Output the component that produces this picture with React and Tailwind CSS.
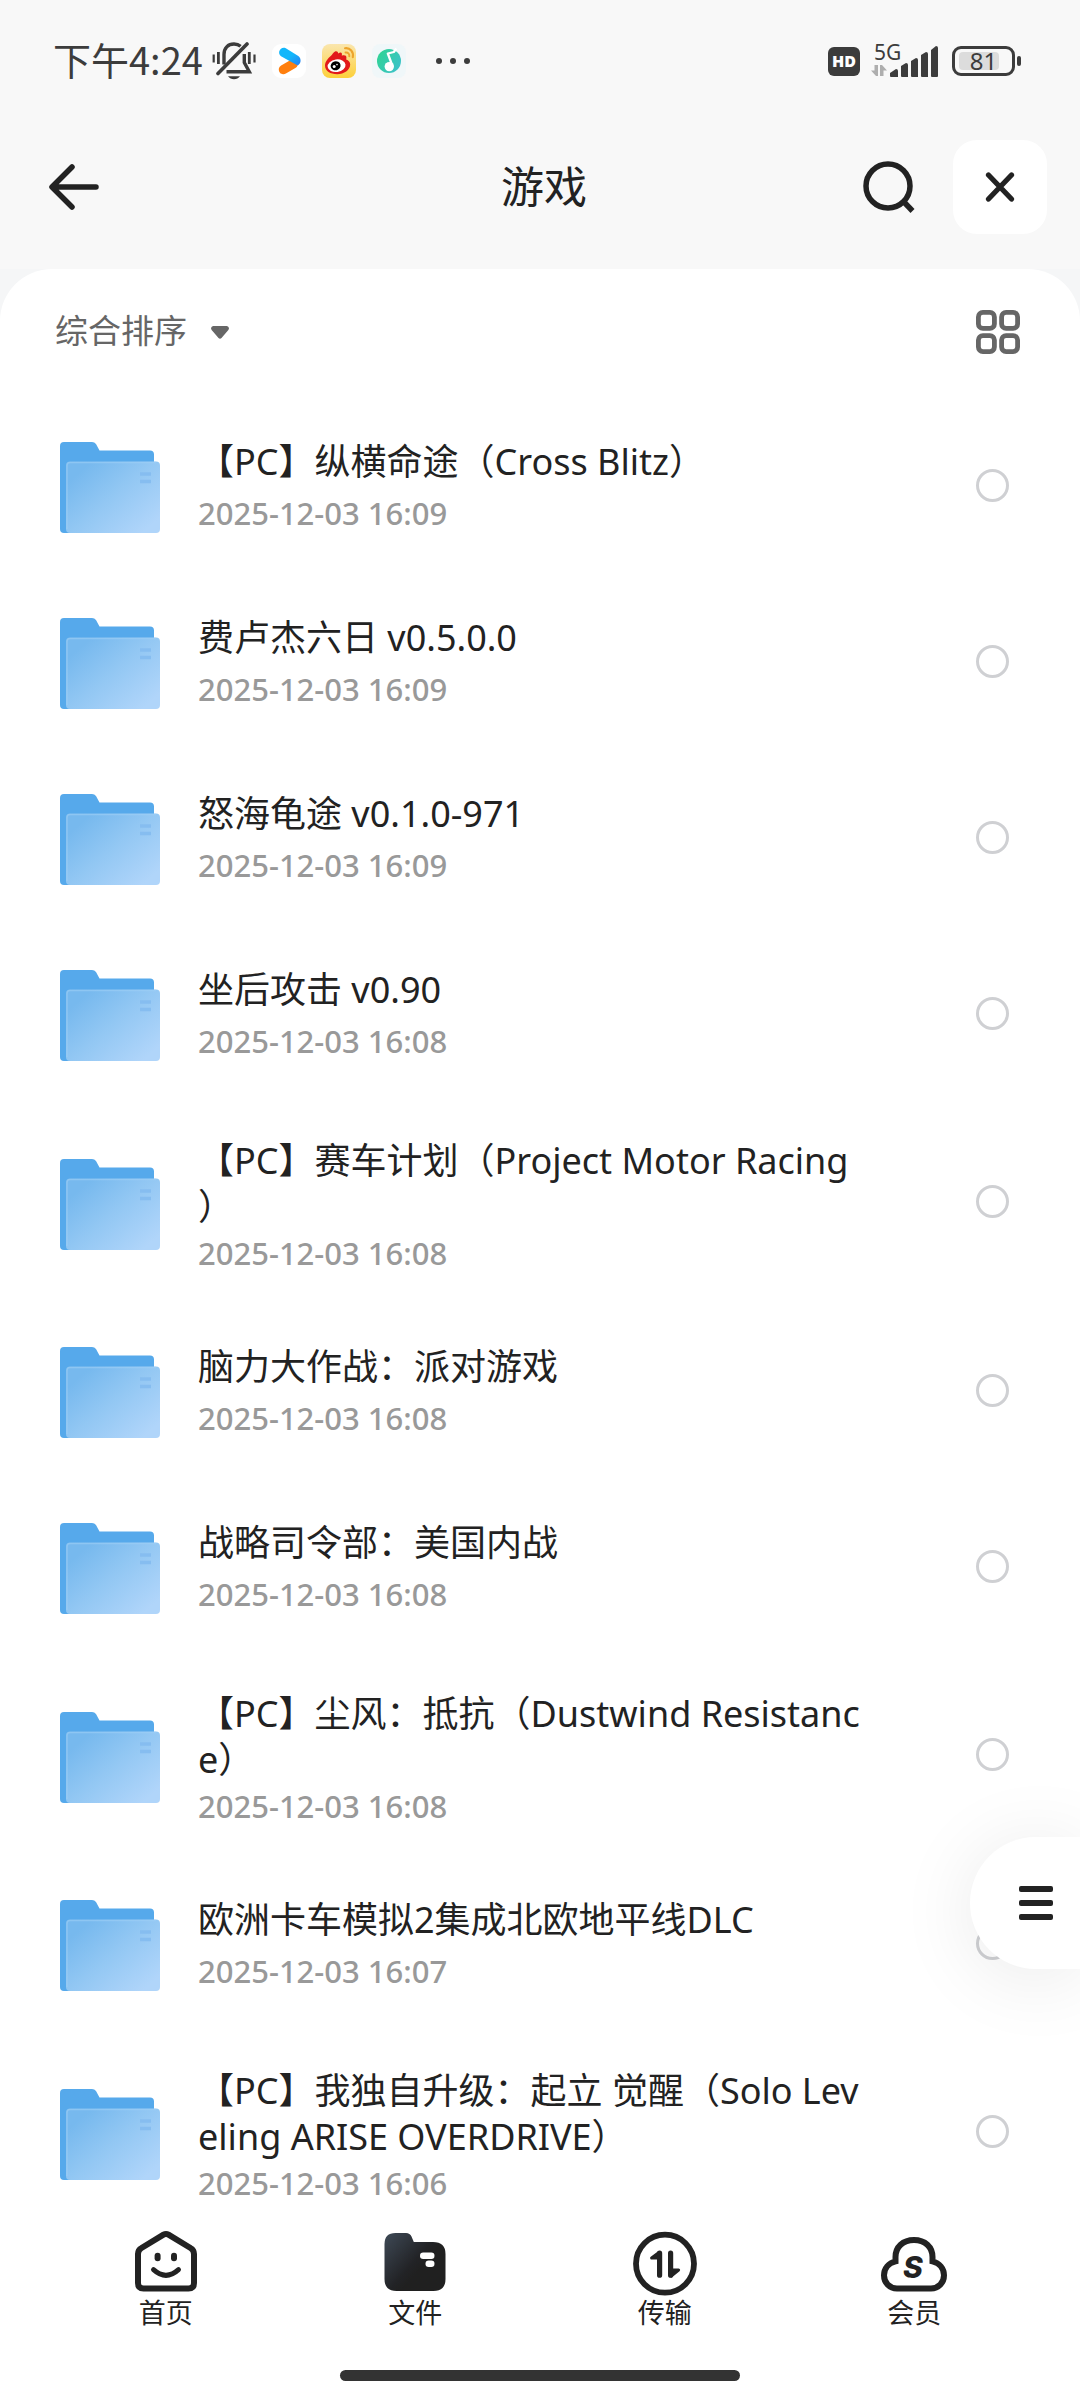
import React, { useState } from 'react';

const FILES = [
  { id: 1, name: '【PC】纵横命途（Cross Blitz）', time: '2025-12-03 16:09' },
  { id: 2, name: '费卢杰六日 v0.5.0.0', time: '2025-12-03 16:09' },
  { id: 3, name: '怒海龟途 v0.1.0-971', time: '2025-12-03 16:09' },
  { id: 4, name: '坐后攻击 v0.90', time: '2025-12-03 16:08' },
  { id: 5, name: '【PC】赛车计划（Project Motor Racing）', time: '2025-12-03 16:08' },
  { id: 6, name: '脑力大作战：派对游戏', time: '2025-12-03 16:08' },
  { id: 7, name: '战略司令部：美国内战', time: '2025-12-03 16:08' },
  { id: 8, name: '【PC】尘风：抵抗（Dustwind Resistance）', time: '2025-12-03 16:08' },
  { id: 9, name: '欧洲卡车模拟2集成北欧地平线DLC', time: '2025-12-03 16:07' },
  { id: 10, name: '【PC】我独自升级：起立 觉醒（Solo Leveling ARISE OVERDRIVE）', time: '2025-12-03 16:06' },
];

// Status bar icons
const MutedBellIcon = () => (
  <svg className="w-11 h-[38px]" viewBox="0 0 44 38" fill="none" stroke="#3c3c3c" strokeWidth="3.4">
    <path d="M1.7 12.5v8M42.5 12.5v8" strokeWidth="2.2" />
    <path d="M6.4 10v12M37.3 10v12" strokeWidth="2.8" />
    <path d="M12 22.5V12.5C12 6 16 2 22 2c2.6 0 4.8.7 6.6 2.2" />
    <path d="M32.3 12v8.5l5 9.2H14.5" />
    <path d="M35 2L6 31.5" strokeLinecap="round" strokeWidth="3.6" />
    <path d="M16 34.3h12c-1.5 2-3.5 3-6 3s-4.5-1-6-3z" fill="#3c3c3c" stroke="none" />
  </svg>
);

const VideoAppIcon = () => (
  <svg className="size-[34px]" viewBox="0 0 34 34">
    <defs>
      <linearGradient id="video-blue" x1="0" y1="0" x2="1" y2="1">
        <stop offset="0.5" stopColor="#12b7fb" />
        <stop offset="1" stopColor="#2b7df0" />
      </linearGradient>
    </defs>
    <rect width="34" height="34" rx="9" fill="#fff" />
    <path d="M11.5 25.5L21 20" stroke="#ff7f0e" strokeWidth="9.5" strokeLinecap="round" />
    <path
      d="M13.8 4.3l12.5 7.7c3.3 2.6 3 7.6-.6 9.4L9 12.3C4.6 9 8.5 2 13.8 4.3z"
      fill="url(#video-blue)"
    />
  </svg>
);

const WeiboIcon = () => (
  <svg className="size-[34px]" viewBox="0 0 34 34">
    <defs>
      <linearGradient id="weibo-bg" x1="0" y1="0" x2="0" y2="1">
        <stop offset="0" stopColor="#fae6ae" />
        <stop offset="1" stopColor="#fdd03a" />
      </linearGradient>
    </defs>
    <rect width="34" height="34" rx="8" fill="url(#weibo-bg)" />
    <path
      d="M3 21.5c0-3.5 3-7.5 6-9.8 1.5-1.2 2-3 4-4.2 1.5-.9 3 0 3.2 2 1.5-1 3-1.5 3.6-.2.3.8.1 1.7 0 2.5 2.2-.9 5-.5 4.6 2.2-.1.9-.3 1.3-.2 1.5 2.4 1 4 2.6 4 5 0 5.5-6.2 9.7-13 9.7S3 27 3 21.5z"
      fill="#e2191b"
    />
    <ellipse cx="14.6" cy="21.7" rx="9" ry="6.3" transform="rotate(-8 14.6 21.7)" fill="#fff" />
    <ellipse cx="13.6" cy="21.8" rx="5" ry="4.5" transform="rotate(-15 13.6 21.8)" fill="#000" />
    <circle cx="12.2" cy="22.4" r="1.5" fill="#fff" />
    <circle cx="15" cy="20.6" r=".8" fill="#fff" />
    <path d="M23 4.2c5-.8 9 3.8 7.8 9" fill="none" stroke="#eda42c" strokeWidth="2.1" strokeLinecap="round" />
    <path d="M23.5 8.5c2.4-.4 4.2 1.5 3.8 3.8" fill="none" stroke="#eda42c" strokeWidth="1.9" strokeLinecap="round" />
  </svg>
);

const MusicAppIcon = () => (
  <svg className="size-[34px]" viewBox="0 0 34 34">
    <defs>
      <linearGradient id="music-bg" x1="0" y1="0" x2="1" y2="0.6">
        <stop offset="0" stopColor="#2fd58f" />
        <stop offset="1" stopColor="#3cc3c6" />
      </linearGradient>
    </defs>
    <rect width="34" height="34" rx="8" fill="#f0f7f9" />
    <circle cx="17" cy="17" r="12" fill="url(#music-bg)" />
    <circle cx="17.3" cy="22.6" r="4.7" fill="#fff" />
    <path d="M20.5 22L15.8 9.5l6-1.5 2.5-3.5" fill="none" stroke="#fff" strokeWidth="2.3" strokeLinejoin="round" />
  </svg>
);

const SignalIcon = () => (
  <div className="relative ml-[11px] mr-3.5">
    <svg className="w-[67px] h-[34px]" viewBox="0 0 67 34" fill="#3c3c3c">
      <path d="M7 21v11H5l-5-5.5h3.5V21zM9 32V21h2l5 5.5h-3.5V32z" fill="#aeaeae" />
      <path d="M19 29l6-4q2 0 2 2v6h-7q-1 0-1-1z" />
      <path d="M30 22l5-3q2 0 2 2v12h-6q-1 0-1-1z" />
      <path d="M40 17l5-3q2 0 2 2v17h-6q-1 0-1-1z" />
      <path d="M50 11l5-3q2 0 2 2v23h-6q-1 0-1-1z" />
      <path d="M60 6l5-4q2 0 2 2v28q0 1-1 1h-5q-1 0-1-1z" />
    </svg>
    <span className="absolute left-[3px] -top-1 text-[21px] leading-6">5G</span>
  </div>
);

const Battery = ({ level }) => (
  <div className="flex items-center gap-0.5">
    <div className="relative flex h-[30px] w-[63px] items-center justify-center rounded-[9px] border-[3px] border-[#3c3c3c]">
      <span className="absolute inset-y-[3px] left-1 w-10 rounded-sm bg-[#dcdcdc]" />
      <span className="relative text-[24px] leading-6">{level}</span>
    </div>
    <span className="h-2.5 w-1 rounded-full bg-[#3c3c3c]" />
  </div>
);

// Toolbar icons
const BackIcon = () => (
  <svg className="w-[50px] h-[46px]" viewBox="0 0 50 46" fill="none" stroke="#222" strokeWidth="5.5" strokeLinecap="round" strokeLinejoin="round">
    <path d="M23 3L3 23l20 20M3.5 23H47" />
  </svg>
);

const SearchIcon = () => (
  <svg className="size-[52px]" viewBox="0 0 52 52" fill="none" stroke="#222" strokeWidth="5.5">
    <circle cx="25" cy="25" r="22" />
    <path d="M41 41l8.5 9" />
  </svg>
);

const CloseIcon = () => (
  <svg className="size-[30px]" viewBox="0 0 30 30" fill="none" stroke="#222" strokeWidth="5.2" strokeLinecap="round">
    <path d="M3.5 3l23 24M26.5 3l-23 24" />
  </svg>
);

const GridIcon = () => (
  <svg className="size-[44px]" viewBox="0 0 44 44" fill="none" stroke="#666" strokeWidth="4.8">
    <rect x="2.4" y="2.4" width="16" height="16" rx="4.5" />
    <rect x="25.6" y="2.4" width="16" height="16" rx="4.5" />
    <rect x="2.4" y="25.6" width="16" height="16" rx="4.5" />
    <rect x="25.6" y="25.6" width="16" height="16" rx="4.5" />
  </svg>
);

const FolderIcon = () => (
  <svg className="w-[100px] h-24 shrink-0" viewBox="0 0 100 96">
    <defs>
      <linearGradient id="folder-front" x1="0.1" y1="0.2" x2="0.9" y2="0.9">
        <stop offset="0" stopColor="#77b9ee" />
        <stop offset="0.45" stopColor="#92c7f3" />
        <stop offset="1" stopColor="#b0d5fa" />
      </linearGradient>
    </defs>
    <path
      d="M0 9q0-4 4-4h28q2.5 0 4 2l3.5 6.5H90q4 0 4 4V92q0 4-4 4H4q-4 0-4-4z"
      fill="#56a9eb"
    />
    <rect x="6" y="24.5" width="94" height="71.5" rx="4" fill="url(#folder-front)" />
    <path d="M7 92V28.5q0-3 3-3h86" fill="none" stroke="#9fcef5" strokeWidth="1.5" opacity="0.6" />
    <path d="M80 37h11M80 44.5h11" stroke="#86bdf0" strokeWidth="3.5" />
  </svg>
);

// Bottom tab icons
const HomeIcon = () => (
  <svg className="size-[68px]" viewBox="0 0 68 68" fill="none" stroke="#222" strokeWidth="6">
    <path d="M31.5 5.7q2.5-1.4 5 0L58.5 19q3.5 2 3.5 6v29q0 5.5-5.5 5.5h-45Q6 59.5 6 54V25q0-4 3.5-6z" />
    <path d="M21.5 40.7q12.5 11.3 25 0" strokeWidth="5" strokeLinecap="round" />
    <rect x="22.6" y="23.7" width="6" height="8.5" rx="3" fill="#222" stroke="none" />
    <rect x="39" y="23.7" width="6" height="8.5" rx="3" fill="#222" stroke="none" />
  </svg>
);

const FilesIcon = () => (
  <svg className="size-[68px]" viewBox="0 0 68 68">
    <defs>
      <linearGradient id="files-bg" x1="0" y1="0.1" x2="0.6" y2="0.6">
        <stop offset="0" stopColor="#3c4652" />
        <stop offset="0.8" stopColor="#222326" />
        <stop offset="1" stopColor="#202020" />
      </linearGradient>
    </defs>
    <path
      d="M3.5 15Q3.5 4 14.5 4H25q4 0 5.5 3.5L32.8 13H52q12.5 0 12.5 12v25q0 12-12 12h-37q-12 0-12-12z"
      fill="url(#files-bg)"
    />
    <rect x="39" y="23.5" width="14.5" height="6.5" rx="3.2" fill="#fff" />
    <rect x="44.5" y="31.5" width="9" height="6.5" rx="3.2" fill="#fff" />
  </svg>
);

const TransferIcon = () => (
  <svg className="size-[68px]" viewBox="0 0 68 68" fill="none" stroke="#222" strokeLinecap="round" strokeLinejoin="round">
    <circle cx="34" cy="34.7" r="29" strokeWidth="5.8" />
    <path d="M28.6 24.2v22M39.6 24.2v22" strokeWidth="5.2" />
    <path d="M28 23.5L20.6 29H28zM40.2 47l7.4-6h-7.4z" strokeWidth="3" fill="#222" />
  </svg>
);

const MemberIcon = () => (
  <svg className="size-[68px]" viewBox="0 0 68 68">
    <path
      d="M17 59.5h34c7.5 0 13-5.8 13-13.2 0-7-4.7-12.3-11.5-14V28C52.5 18 45 11 34 11s-18.5 7-18.5 17v4.3C8.7 34 4 39.3 4 46.3 4 53.7 9.5 59.5 17 59.5z"
      fill="none"
      stroke="#222"
      strokeWidth="6"
    />
    <text x="33" y="49" textAnchor="middle" fontSize="30" fontWeight="800" fontStyle="italic" fill="#222" className="font-['Inter',sans-serif]">
      S
    </text>
  </svg>
);

const TABS = [
  { key: 'home', label: '首页', Icon: HomeIcon },
  { key: 'files', label: '文件', Icon: FilesIcon },
  { key: 'transfer', label: '传输', Icon: TransferIcon },
  { key: 'member', label: '会员', Icon: MemberIcon },
];

const StatusBar = () => (
  <div className="flex h-[122px] items-center justify-between pl-[53px] pr-[59px] text-[#3c3c3c]">
    <div className="flex items-center">
      <span className="mr-[9px] pb-1 font-['Noto_Sans_CJK_SC',sans-serif] text-[38px] leading-[46px]">下午4:24</span>
      <MutedBellIcon />
      <div className="ml-4 flex items-center gap-4">
        <VideoAppIcon />
        <WeiboIcon />
        <MusicAppIcon />
      </div>
      <div className="ml-[30px] flex gap-2">
        <span className="size-1.5 rounded-full bg-[#3c3c3c]" />
        <span className="size-1.5 rounded-full bg-[#3c3c3c]" />
        <span className="size-1.5 rounded-full bg-[#3c3c3c]" />
      </div>
    </div>
    <div className="flex items-center">
      <span className="flex h-[29px] w-8 items-center justify-center rounded-md bg-[#3c3c3c] font-['Open_Sans',sans-serif] text-base font-extrabold text-white">
        HD
      </span>
      <SignalIcon />
      <Battery level={81} />
    </div>
  </div>
);

const FileRow = ({ file, checked, onToggle }) => {
  const inputId = `file-${file.id}`;

  return (
    <li className="flex min-h-[176px] items-center pl-[60px] pr-[71px]">
      <FolderIcon />
      <label htmlFor={inputId} className="ml-[38px] mr-[100px] flex-1 self-start pt-[37px] pb-[26px]">
        <span className="flex min-h-[56px] flex-col justify-center text-[36px] leading-[46px] text-[#222] [line-break:anywhere] [text-spacing-trim:space-all]">
          {file.name}
        </span>
        <span className="block text-[31px] leading-[46px] font-medium text-[#999]">{file.time}</span>
      </label>
      <input
        id={inputId}
        type="checkbox"
        checked={checked}
        onChange={() => onToggle(file.id)}
        className="size-[33px] shrink-0 appearance-none rounded-full border-[3px] border-[#cfd0d3] checked:bg-[#56a9eb]"
      />
    </li>
  );
};

const App = () => {
  const [selected, setSelected] = useState([]);

  const toggle = (id) => {
    setSelected((prev) => (prev.includes(id) ? prev.filter((x) => x !== id) : [...prev, id]));
  };

  return (
    <div className="flex min-h-screen flex-col bg-[#f5f6f7] font-['Noto_Sans','Noto_Sans_CJK_SC',sans-serif]">
      <div className="bg-[#f8f8f8]">
        <StatusBar />

        <header className="grid grid-cols-[1fr_auto_1fr] items-center pt-[18px] pb-[35px] pl-[41px] pr-[33px]">
          <button type="button" aria-label="返回" className="justify-self-start p-2">
            <BackIcon />
          </button>
          <h1 className="text-[43px] leading-[60px] text-[#222]">游戏</h1>
          <div className="flex items-center gap-[38px] justify-self-end">
            <button type="button" aria-label="搜索">
              <SearchIcon />
            </button>
            <button type="button" aria-label="关闭" className="flex size-[94px] items-center justify-center rounded-3xl bg-white">
              <CloseIcon />
            </button>
          </div>
        </header>
      </div>

      <main className="flex-1 rounded-t-[52px] bg-white pb-[160px]">
        <div className="flex h-32 items-center justify-between pl-[55px] pr-[60px] pb-0.5">
          <button type="button" className="flex items-center gap-6 text-[33px] leading-[46px] text-[#666]">
            <span className="pb-0.5">综合排序</span>
            <svg className="w-[18px] h-[13px]" viewBox="0 0 18 13" fill="#666">
              <path d="M2 0h14q2 .5 2 2.5-.5 1.5-1.5 2.5l-6 7q-1.5 1.5-3 0l-6-7Q.5 4 0 2.5 0 .5 2 0z" />
            </svg>
          </button>
          <button type="button" aria-label="切换视图">
            <GridIcon />
          </button>
        </div>

        <ul>
          {FILES.map((file) => (
            <FileRow key={file.id} file={file} checked={selected.includes(file.id)} onToggle={toggle} />
          ))}
        </ul>
      </main>

      <footer className="fixed inset-x-0 bottom-0 bg-white pb-[19px]">
        <nav className="grid grid-cols-4 px-[41px]">
          {TABS.map(({ key, label, Icon }) => (
            <a key={key} href={`#${key}`} className="flex flex-col items-center text-[27px] leading-8 text-[#222]">
              <Icon />
              {label}
            </a>
          ))}
        </nav>
        <div className="mx-auto mt-[41px] h-[11px] w-[400px] rounded-full bg-[#333]" />
      </footer>

      {/* Floating menu, docked to the right edge */}
      <button
        type="button"
        aria-label="菜单"
        className="fixed right-0 bottom-[431px] flex h-[132px] w-[110px] items-center rounded-l-full bg-white pl-[49px] shadow-[0_8px_80px_rgba(0,0,0,0.09)]"
      >
        <svg className="w-[34px] h-[34px]" viewBox="0 0 34 34" fill="#222">
          <rect y="0" width="34" height="6" rx="2" />
          <rect y="14" width="34" height="6" rx="2" />
          <rect y="28" width="34" height="6" rx="2" />
        </svg>
      </button>
    </div>
  );
};

export default App;
